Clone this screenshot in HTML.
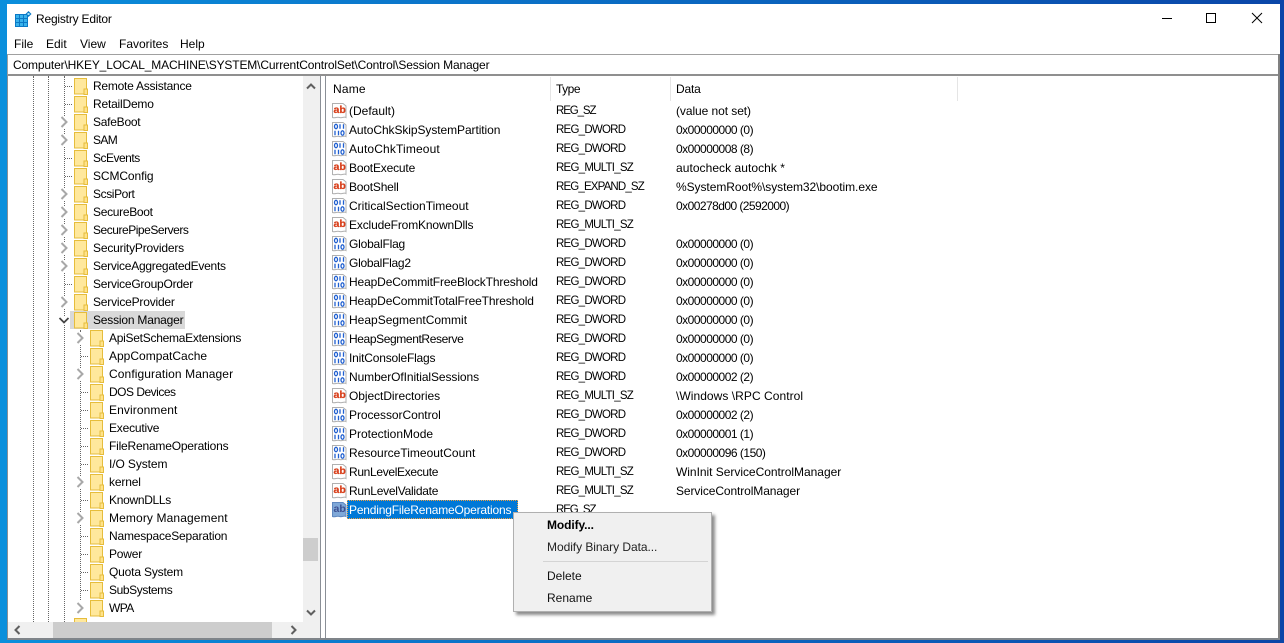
<!DOCTYPE html>
<html><head><meta charset="utf-8"><title>Registry Editor</title>
<style>
html,body{margin:0;padding:0}
body{width:1284px;height:643px;overflow:hidden;position:relative;background:linear-gradient(90deg,#0a8fdc 0%,#0b78cc 30%,#0a5cb8 70%,#0a46a8 100%);font:12px "Liberation Sans",sans-serif;color:#000}
#w{position:absolute;left:7px;top:4px;width:1273px;height:636px;background:#fff;overflow:hidden}
.t,.n,.y,.v,.m{white-space:nowrap;line-height:18px;height:18px;position:absolute}
.a{position:absolute}
.n{left:342px}.y{left:549px;font-size:11.5px;letter-spacing:-.75px}.v{left:669px}
.z{letter-spacing:-.5px}
.t{left:86px}.u{left:102px}
svg.i{position:absolute;width:15px;height:16px;left:325px}
svg.f{position:absolute;width:14px;height:17px}
svg.c{position:absolute;width:9px;height:12px}
.dv{position:absolute;width:0;border-left:1px dotted #666}
.dh{position:absolute;height:0;width:7px;border-top:1px dotted #666}
.mb{top:31px;line-height:18px;position:absolute}
.ab{font-family:"Liberation Sans",sans-serif;font-weight:bold;font-size:10.500px;fill:#d8401c;stroke:#d8401c;stroke-width:.25px}
</style></head><body>
<svg width="0" height="0" style="position:absolute">
<symbol id="fo" viewBox="0 0 14 17"><rect x=".5" y=".5" width="12" height="15.5" fill="#ffe89c" stroke="#e6bd3c"/><rect x="10" y="11" width="3.500" height="5.500" fill="#ffe28a" stroke="#e6bd3c"/></symbol>
<symbol id="ar" viewBox="0 0 9 12"><rect width="9" height="12" fill="#fff"/><path d="M1.500 1 6.500 6 1.500 11" fill="none" stroke="#a8a8a8" stroke-width="2"/></symbol>
<symbol id="pg" viewBox="0 0 15 16"><path d="M.5 .5H11L14 3V14.500C12 13 10 15.500 7.500 14.500 5 13.500 3 15.500 .5 14.500Z" fill="#fff" stroke="#b0b0b0"/></symbol>
<symbol id="bi" viewBox="0 0 15 16"><path d="M.5 .5H11L14 3V14.500C12 13 10 15.500 7.500 14.500 5 13.500 3 15.500 .5 14.500Z" fill="#fff" stroke="#b0b0b0"/><g fill="none" stroke="#1f5fd0" stroke-width="1.300"><ellipse cx="4" cy="4.500" rx="1.500" ry="2.200"/><path d="M8 2.200V6.800M11.500 2.200V6.800M3 8.700V13.300M6.500 8.700V13.300"/><ellipse cx="10.500" cy="11" rx="1.500" ry="2.200"/></g></symbol>
</svg>
<div id="w">
<!-- title bar -->
<svg class="a" style="left:8px;top:7px" width="17" height="17" viewBox="0 0 17 17"><rect x="0" y="3" width="13" height="13" fill="#0a79c6"/><g fill="#38b2ec"><rect x="1" y="4" width="3" height="3"/><rect x="5" y="4" width="3" height="3"/><rect x="9" y="4" width="3" height="3"/><rect x="1" y="8" width="3" height="3"/><rect x="5" y="8" width="3" height="3"/><rect x="9" y="8" width="3" height="3"/><rect x="1" y="12" width="3" height="3"/><rect x="5" y="12" width="3" height="3"/><rect x="9" y="12" width="3" height="3"/></g><path d="M13.500 0 16.500 3 13.500 6 10.500 3Z" fill="#0a79c6"/><rect x="12.500" y="2" width="2" height="2" fill="#9fe0fa"/></svg>
<div class="a" style="left:29px;top:6px;line-height:18px;white-space:nowrap;letter-spacing:-.2px">Registry Editor</div>
<div class="a" style="left:1155px;top:14px;width:10px;height:1px;background:#000"></div>
<div class="a" style="left:1199px;top:9px;width:8px;height:8px;border:1px solid #000"></div>
<svg class="a" style="left:1244px;top:8px" width="12" height="12" viewBox="0 0 12 12"><path d="M1 1 11 11M11 1 1 11" stroke="#000" stroke-width="1" fill="none"/></svg>
<!-- menu -->
<div class="mb" style="left:7px">File</div><div class="mb" style="left:39px">Edit</div><div class="mb" style="left:73px">View</div><div class="mb" style="left:112px">Favorites</div><div class="mb" style="left:173px">Help</div>
<!-- address -->
<div class="a" style="left:0;top:50px;width:1273px;height:19px;border-top:1px solid #a0a0a0;border-bottom:2px solid #8f8f8f;border-left:1px solid #a0a0a0;box-sizing:content-box"></div>
<div class="a" style="left:6px;top:52px;line-height:18px;white-space:nowrap;letter-spacing:-.155px">Computer\HKEY_LOCAL_MACHINE\SYSTEM\CurrentControlSet\Control\Session Manager</div>
<!-- panes borders -->
<div class="a" style="left:0;top:72px;width:1px;height:562px;background:#8a8f96"></div>
<div class="a" style="left:313px;top:72px;width:1px;height:562px;background:#8a8f96"></div>
<div class="a" style="left:318px;top:72px;width:1px;height:562px;background:#8a8f96"></div>
<div class="a" style="left:1271px;top:50px;width:2px;height:584px;background:#808080"></div>
<div class="a" style="left:0;top:634px;width:1273px;height:2px;background:#7f8489"></div>
<!-- tree guides -->
<div class="dv" style="left:26px;top:72px;height:546px"></div>
<div class="dv" style="left:41px;top:72px;height:546px"></div>
<div class="dv" style="left:57px;top:72px;height:546px"></div>
<div class="dv" style="left:73px;top:326px;height:270px"></div>
<div class="dh" style="left:58px;top:82px"></div><div class="dh" style="left:58px;top:100px"></div><div class="dh" style="left:58px;top:154px"></div><div class="dh" style="left:58px;top:172px"></div><div class="dh" style="left:58px;top:280px"></div>
<div class="dh" style="left:74px;top:352px"></div><div class="dh" style="left:74px;top:388px"></div><div class="dh" style="left:74px;top:406px"></div><div class="dh" style="left:74px;top:424px"></div><div class="dh" style="left:74px;top:442px"></div><div class="dh" style="left:74px;top:460px"></div><div class="dh" style="left:74px;top:496px"></div><div class="dh" style="left:74px;top:532px"></div><div class="dh" style="left:74px;top:550px"></div><div class="dh" style="left:74px;top:568px"></div><div class="dh" style="left:74px;top:586px"></div>
<!-- selected tree bg -->
<div class="a" style="left:63px;top:307px;width:115px;height:18px;background:#d9d9d9"></div>
<!-- tree folders lvl 1 -->
<svg class="f" style="left:67px;top:74px"><use href="#fo"/></svg><svg class="f" style="left:67px;top:92px"><use href="#fo"/></svg><svg class="f" style="left:67px;top:110px"><use href="#fo"/></svg><svg class="f" style="left:67px;top:128px"><use href="#fo"/></svg><svg class="f" style="left:67px;top:146px"><use href="#fo"/></svg><svg class="f" style="left:67px;top:164px"><use href="#fo"/></svg><svg class="f" style="left:67px;top:182px"><use href="#fo"/></svg><svg class="f" style="left:67px;top:200px"><use href="#fo"/></svg><svg class="f" style="left:67px;top:218px"><use href="#fo"/></svg><svg class="f" style="left:67px;top:236px"><use href="#fo"/></svg><svg class="f" style="left:67px;top:254px"><use href="#fo"/></svg><svg class="f" style="left:67px;top:272px"><use href="#fo"/></svg><svg class="f" style="left:67px;top:290px"><use href="#fo"/></svg><svg class="f" style="left:67px;top:308px"><use href="#fo"/></svg>
<svg class="f" style="left:67px;top:614px"><use href="#fo"/></svg>
<!-- lvl 2 -->
<svg class="f" style="left:83px;top:326px"><use href="#fo"/></svg><svg class="f" style="left:83px;top:344px"><use href="#fo"/></svg><svg class="f" style="left:83px;top:362px"><use href="#fo"/></svg><svg class="f" style="left:83px;top:380px"><use href="#fo"/></svg><svg class="f" style="left:83px;top:398px"><use href="#fo"/></svg><svg class="f" style="left:83px;top:416px"><use href="#fo"/></svg><svg class="f" style="left:83px;top:434px"><use href="#fo"/></svg><svg class="f" style="left:83px;top:452px"><use href="#fo"/></svg><svg class="f" style="left:83px;top:470px"><use href="#fo"/></svg><svg class="f" style="left:83px;top:488px"><use href="#fo"/></svg><svg class="f" style="left:83px;top:506px"><use href="#fo"/></svg><svg class="f" style="left:83px;top:524px"><use href="#fo"/></svg><svg class="f" style="left:83px;top:542px"><use href="#fo"/></svg><svg class="f" style="left:83px;top:560px"><use href="#fo"/></svg><svg class="f" style="left:83px;top:578px"><use href="#fo"/></svg><svg class="f" style="left:83px;top:596px"><use href="#fo"/></svg>
<!-- arrows -->
<svg class="c" style="left:53px;top:112px"><use href="#ar"/></svg><svg class="c" style="left:53px;top:130px"><use href="#ar"/></svg><svg class="c" style="left:53px;top:184px"><use href="#ar"/></svg><svg class="c" style="left:53px;top:202px"><use href="#ar"/></svg><svg class="c" style="left:53px;top:220px"><use href="#ar"/></svg><svg class="c" style="left:53px;top:238px"><use href="#ar"/></svg><svg class="c" style="left:53px;top:256px"><use href="#ar"/></svg><svg class="c" style="left:53px;top:292px"><use href="#ar"/></svg>
<svg class="c" style="left:69px;top:328px"><use href="#ar"/></svg><svg class="c" style="left:69px;top:364px"><use href="#ar"/></svg><svg class="c" style="left:69px;top:472px"><use href="#ar"/></svg><svg class="c" style="left:69px;top:508px"><use href="#ar"/></svg><svg class="c" style="left:69px;top:598px"><use href="#ar"/></svg>
<svg class="a" style="left:51px;top:312px;background:#fff" width="12" height="9" viewBox="0 0 12 9"><path d="M1.500 2 6 6.500 10.500 2" fill="none" stroke="#444" stroke-width="1.800"/></svg>
<!-- tree text -->
<div class="t" style="top:73px;letter-spacing:-.24px">Remote Assistance</div><div class="t" style="top:91px;letter-spacing:-.2px">RetailDemo</div><div class="t" style="top:109px;letter-spacing:-.25px">SafeBoot</div><div class="t" style="top:127px;letter-spacing:-.6px">SAM</div><div class="t" style="top:145px;letter-spacing:-.5px">ScEvents</div><div class="t" style="top:163px;letter-spacing:-.1px">SCMConfig</div><div class="t" style="top:181px;letter-spacing:-.4px">ScsiPort</div><div class="t" style="top:199px;letter-spacing:-.3px">SecureBoot</div><div class="t" style="top:217px;letter-spacing:-.47px">SecurePipeServers</div><div class="t" style="top:235px;letter-spacing:-.18px">SecurityProviders</div><div class="t" style="top:253px;letter-spacing:-.26px">ServiceAggregatedEvents</div><div class="t" style="top:271px;letter-spacing:-.24px">ServiceGroupOrder</div><div class="t" style="top:289px;letter-spacing:-.2px">ServiceProvider</div><div class="t" style="top:307px;letter-spacing:-.2px">Session Manager</div>
<div class="t u" style="top:325px;letter-spacing:-.27px">ApiSetSchemaExtensions</div><div class="t u" style="top:343px">AppCompatCache</div><div class="t u" style="top:361px;letter-spacing:.1px">Configuration Manager</div><div class="t u" style="top:379px;letter-spacing:-.5px">DOS Devices</div><div class="t u" style="top:397px;letter-spacing:.1px">Environment</div><div class="t u" style="top:415px;letter-spacing:-.2px">Executive</div><div class="t u" style="top:433px;letter-spacing:-.2px">FileRenameOperations</div><div class="t u" style="top:451px;letter-spacing:-.1px">I/O System</div><div class="t u" style="top:469px;letter-spacing:-.15px">kernel</div><div class="t u" style="top:487px;letter-spacing:-.3px">KnownDLLs</div><div class="t u" style="top:505px;letter-spacing:.12px">Memory Management</div><div class="t u" style="top:523px;letter-spacing:-.2px">NamespaceSeparation</div><div class="t u" style="top:541px;letter-spacing:-.2px">Power</div><div class="t u" style="top:559px;letter-spacing:-.17px">Quota System</div><div class="t u" style="top:577px;letter-spacing:-.4px">SubSystems</div><div class="t u" style="top:595px;letter-spacing:-.6px">WPA</div>
<!-- v scrollbar -->
<div class="a" style="left:296px;top:72px;width:17px;height:562px;background:#f0f0f0"></div>
<div class="a" style="left:296px;top:534px;width:15px;height:23px;background:#cdcdcd"></div>
<svg class="a" style="left:298px;top:78px" width="12" height="9" viewBox="0 0 12 9"><path d="M2 6.500 6 2.500 10 6.500" fill="none" stroke="#606060" stroke-width="2"/></svg>
<svg class="a" style="left:298px;top:604px" width="12" height="9" viewBox="0 0 12 9"><path d="M2 2.500 6 6.500 10 2.500" fill="none" stroke="#606060" stroke-width="2"/></svg>
<!-- h scrollbar -->
<div class="a" style="left:1px;top:618px;width:295px;height:16px;background:#f0f0f0"></div>
<div class="a" style="left:46px;top:618px;width:219px;height:16px;background:#cdcdcd"></div>
<svg class="a" style="left:6px;top:620px" width="9" height="12" viewBox="0 0 9 12"><path d="M6.500 2 2.500 6 6.500 10" fill="none" stroke="#606060" stroke-width="2"/></svg>
<svg class="a" style="left:282px;top:620px" width="9" height="12" viewBox="0 0 9 12"><path d="M2.500 2 6.500 6 2.500 10" fill="none" stroke="#606060" stroke-width="2"/></svg>
<!-- list header -->
<div class="n" style="left:326px;top:76px;letter-spacing:.2px">Name</div><div class="y" style="top:76px;font-size:12px;letter-spacing:-.5px">Type</div><div class="v" style="top:76px;letter-spacing:-.2px">Data</div>
<div class="a" style="left:543px;top:73px;width:1px;height:24px;background:#e5e5e5"></div>
<div class="a" style="left:663px;top:73px;width:1px;height:24px;background:#e5e5e5"></div>
<div class="a" style="left:950px;top:73px;width:1px;height:24px;background:#e5e5e5"></div>
<!-- selected -->
<div class="a" style="left:340px;top:496px;width:169px;height:17px;background:#0078d7;border:1px dotted #f0a040"></div>
<!-- list rows -->
<div class="a" style="left:0;top:1px">
<svg class="i" style="top:98px" viewBox="0 0 15 16"><use href="#pg"/><text class="ab" x="1.500" y="10">ab</text></svg><div class="n" style="top:97px">(Default)</div><div class="y" style="top:97px;letter-spacing:-1.1px">REG_SZ</div><div class="v" style="top:97px;letter-spacing:-.07px">(value not set)</div>
<svg class="i" style="top:117px"><use href="#bi"/></svg><div class="n" style="top:116px;letter-spacing:-.08px">AutoChkSkipSystemPartition</div><div class="y" style="top:116px">REG_DWORD</div><div class="v z" style="top:116px">0x00000000 (0)</div>
<svg class="i" style="top:136px"><use href="#bi"/></svg><div class="n" style="top:135px;letter-spacing:.14px">AutoChkTimeout</div><div class="y" style="top:135px">REG_DWORD</div><div class="v z" style="top:135px">0x00000008 (8)</div>
<svg class="i" style="top:155px" viewBox="0 0 15 16"><use href="#pg"/><text class="ab" x="1.500" y="10">ab</text></svg><div class="n" style="top:154px;letter-spacing:-.18px">BootExecute</div><div class="y" style="top:154px">REG_MULTI_SZ</div><div class="v" style="top:154px;letter-spacing:.05px">autocheck autochk *</div>
<svg class="i" style="top:174px" viewBox="0 0 15 16"><use href="#pg"/><text class="ab" x="1.500" y="10">ab</text></svg><div class="n" style="top:173px;letter-spacing:-.2px">BootShell</div><div class="y" style="top:173px;letter-spacing:-.84px">REG_EXPAND_SZ</div><div class="v" style="top:173px;letter-spacing:-.06px">%SystemRoot%\system32\bootim.exe</div>
<svg class="i" style="top:193px"><use href="#bi"/></svg><div class="n" style="top:192px">CriticalSectionTimeout</div><div class="y" style="top:192px">REG_DWORD</div><div class="v" style="top:192px;letter-spacing:-.55px">0x00278d00 (2592000)</div>
<svg class="i" style="top:212px" viewBox="0 0 15 16"><use href="#pg"/><text class="ab" x="1.500" y="10">ab</text></svg><div class="n" style="top:211px;letter-spacing:-.15px">ExcludeFromKnownDlls</div><div class="y" style="top:211px">REG_MULTI_SZ</div>
<svg class="i" style="top:231px"><use href="#bi"/></svg><div class="n" style="top:230px;letter-spacing:-.2px">GlobalFlag</div><div class="y" style="top:230px">REG_DWORD</div><div class="v z" style="top:230px">0x00000000 (0)</div>
<svg class="i" style="top:250px"><use href="#bi"/></svg><div class="n" style="top:249px;letter-spacing:-.27px">GlobalFlag2</div><div class="y" style="top:249px">REG_DWORD</div><div class="v z" style="top:249px">0x00000000 (0)</div>
<svg class="i" style="top:269px"><use href="#bi"/></svg><div class="n" style="top:268px;letter-spacing:-.13px">HeapDeCommitFreeBlockThreshold</div><div class="y" style="top:268px">REG_DWORD</div><div class="v z" style="top:268px">0x00000000 (0)</div>
<svg class="i" style="top:288px"><use href="#bi"/></svg><div class="n" style="top:287px;letter-spacing:-.13px">HeapDeCommitTotalFreeThreshold</div><div class="y" style="top:287px">REG_DWORD</div><div class="v z" style="top:287px">0x00000000 (0)</div>
<svg class="i" style="top:307px"><use href="#bi"/></svg><div class="n" style="top:306px">HeapSegmentCommit</div><div class="y" style="top:306px">REG_DWORD</div><div class="v z" style="top:306px">0x00000000 (0)</div>
<svg class="i" style="top:326px"><use href="#bi"/></svg><div class="n" style="top:325px;letter-spacing:-.39px">HeapSegmentReserve</div><div class="y" style="top:325px">REG_DWORD</div><div class="v z" style="top:325px">0x00000000 (0)</div>
<svg class="i" style="top:345px"><use href="#bi"/></svg><div class="n" style="top:344px;letter-spacing:-.19px">InitConsoleFlags</div><div class="y" style="top:344px">REG_DWORD</div><div class="v z" style="top:344px">0x00000000 (0)</div>
<svg class="i" style="top:364px"><use href="#bi"/></svg><div class="n" style="top:363px;letter-spacing:-.09px">NumberOfInitialSessions</div><div class="y" style="top:363px">REG_DWORD</div><div class="v z" style="top:363px">0x00000002 (2)</div>
<svg class="i" style="top:383px" viewBox="0 0 15 16"><use href="#pg"/><text class="ab" x="1.500" y="10">ab</text></svg><div class="n" style="top:382px;letter-spacing:-.06px">ObjectDirectories</div><div class="y" style="top:382px">REG_MULTI_SZ</div><div class="v" style="top:382px;letter-spacing:.05px">\Windows \RPC Control</div>
<svg class="i" style="top:402px"><use href="#bi"/></svg><div class="n" style="top:401px;letter-spacing:-.06px">ProcessorControl</div><div class="y" style="top:401px">REG_DWORD</div><div class="v z" style="top:401px">0x00000002 (2)</div>
<svg class="i" style="top:421px"><use href="#bi"/></svg><div class="n" style="top:420px">ProtectionMode</div><div class="y" style="top:420px">REG_DWORD</div><div class="v z" style="top:420px">0x00000001 (1)</div>
<svg class="i" style="top:440px"><use href="#bi"/></svg><div class="n" style="top:439px">ResourceTimeoutCount</div><div class="y" style="top:439px">REG_DWORD</div><div class="v" style="top:439px;letter-spacing:-.5px">0x00000096 (150)</div>
<svg class="i" style="top:459px" viewBox="0 0 15 16"><use href="#pg"/><text class="ab" x="1.500" y="10">ab</text></svg><div class="n" style="top:458px;letter-spacing:-.33px">RunLevelExecute</div><div class="y" style="top:458px">REG_MULTI_SZ</div><div class="v" style="top:458px;letter-spacing:-.03px">WinInit ServiceControlManager</div>
<svg class="i" style="top:478px" viewBox="0 0 15 16"><use href="#pg"/><text class="ab" x="1.500" y="10">ab</text></svg><div class="n" style="top:477px;letter-spacing:-.25px">RunLevelValidate</div><div class="y" style="top:477px">REG_MULTI_SZ</div><div class="v" style="top:477px;letter-spacing:-.1px">ServiceControlManager</div>
<svg class="i" style="top:497px" viewBox="0 0 15 16"><path d="M.5 .5H11L14 3V14.500C12 13 10 15.500 7.500 14.500 5 13.500 3 15.500 .5 14.500Z" fill="#7fa8d8" stroke="#5f88c0"/><text x="1.500" y="10" font-family="Liberation Sans" font-weight="bold" font-size="10.500" fill="#3c4f90">ab</text></svg>
<div class="n" style="top:496px;color:#fff;letter-spacing:-.19px">PendingFileRenameOperations</div><div class="y" style="top:496px;letter-spacing:-1.1px">REG_SZ</div>
</div>
<!-- context menu -->
<div class="a" style="left:506px;top:508px;width:197px;height:98px;background:#f0f0f0;border:1px solid #b0b0b0;box-shadow:3px 3px 3px rgba(0,0,0,.45)"></div>
<div class="m" style="left:540px;top:512px;font-weight:bold;letter-spacing:-.1px">Modify...</div>
<div class="m" style="left:540px;top:534px;color:#222;letter-spacing:-.05px">Modify Binary Data...</div>
<div class="a" style="left:536px;top:557px;width:165px;height:1px;background:#d4d4d4"></div>
<div class="m" style="left:540px;top:563px;color:#111">Delete</div>
<div class="m" style="left:540px;top:585px;color:#111">Rename</div>
</div>
</body></html>
